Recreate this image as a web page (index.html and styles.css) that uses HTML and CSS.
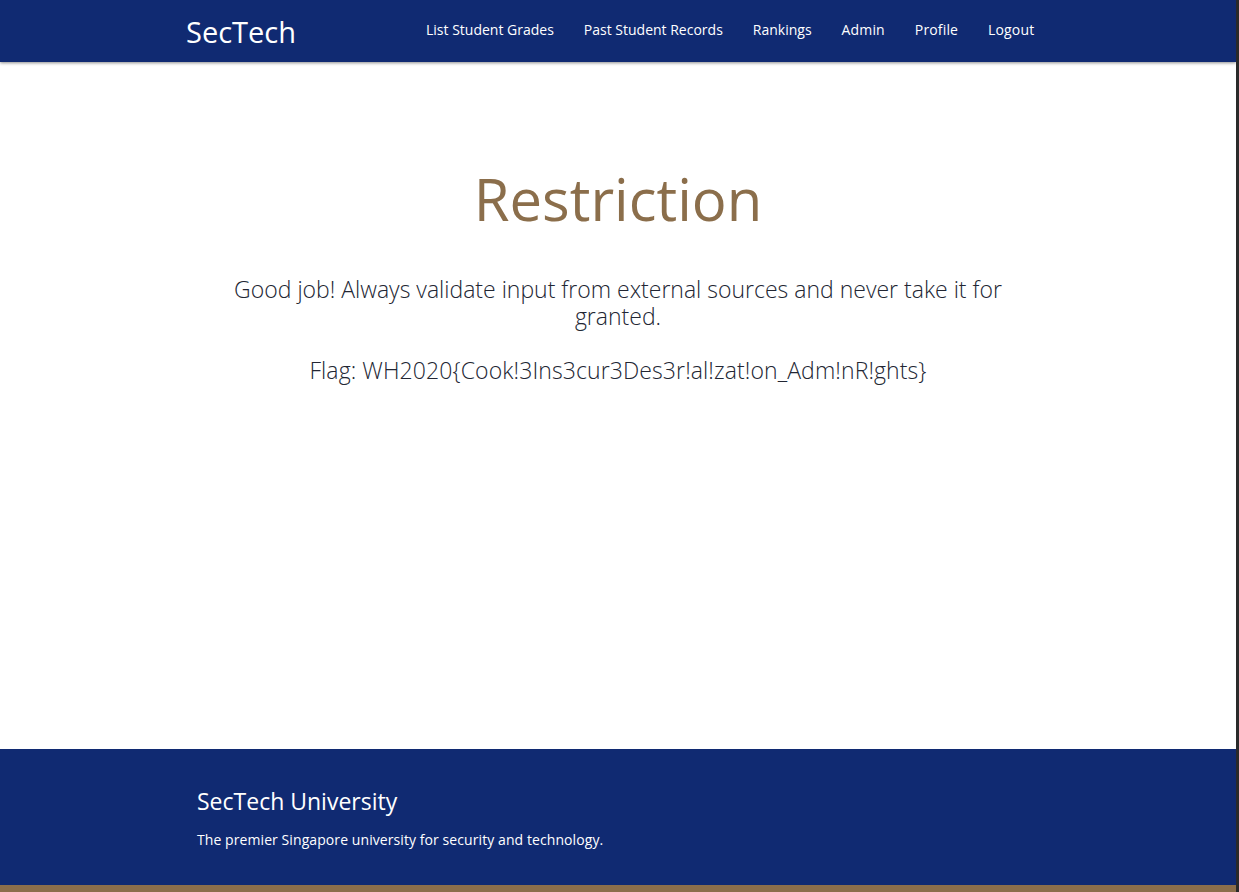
FILE: index.html
```html
<!DOCTYPE html>
<html lang="en">
<head>
<meta charset="utf-8">
<title>SecTech - Restriction</title>
<link rel="stylesheet" href="styles.css">
</head>
<body>
<div class="page">
  <header class="navbar">
    <div class="nav-inner">
      <a class="brand" href="#">SecTech</a>
      <nav class="nav-links">
        <a href="#">List Student Grades</a>
        <a href="#">Past Student Records</a>
        <a href="#">Rankings</a>
        <a href="#">Admin</a>
        <a href="#">Profile</a>
        <a href="#">Logout</a>
      </nav>
    </div>
  </header>
  <main class="main">
    <h1 class="title">Restriction</h1>
    <p class="lead">Good job! Always validate input from external sources and never take it for granted.</p>
    <p class="flag">Flag: WH2020{Cook!3Ins3cur3Des3r!al!zat!on_Adm!nR!ghts}</p>
  </main>
  <footer class="footer">
    <div class="footer-inner">
      <h2 class="footer-title">SecTech University</h2>
      <p class="footer-text">The premier Singapore university for security and technology.</p>
    </div>
  </footer>
  <div class="footer-strip"></div>
</div>
</body>
</html>
```

FILE: styles.css
```css
html {
  background: #2a2a2a;
}
body {
  margin: 0 3px 0 0;
  background: #ffffff;
  font-family: "Open Sans", "Noto Sans", sans-serif;
  color: #212529;
  overflow: hidden;
}
.page {
  display: flex;
  flex-direction: column;
  height: 892px;
}
.navbar {
  height: 62px;
  flex: 0 0 62px;
  background: #102a72;
  box-shadow: 0 1px 3px rgba(0, 0, 0, 0.45);
  position: relative;
  z-index: 1;
}
.nav-inner {
  display: flex;
  align-items: center;
  height: 100%;
  padding-left: 186px;
}
.brand {
  color: #ffffff;
  text-decoration: none;
  font-size: 29px;
  line-height: 1;
  margin-top: 1px;
}
.nav-links {
  display: flex;
  gap: 30px;
  margin-left: 130px;
  margin-top: -3px;
}
.nav-links a {
  color: #ffffff;
  text-decoration: none;
  font-size: 14px;
}
.nav-links a:nth-child(n+4) {
  letter-spacing: 0.15px;
}
.main {
  flex: 1;
  display: flex;
  flex-direction: column;
  align-items: center;
  text-align: center;
}
.title {
  margin: 102px 0 0;
  font-size: 58px;
  font-weight: 400;
  line-height: 1.2;
  color: #8b6e4b;
}
.lead {
  margin: 42px 0 0;
  width: 800px;
  font-size: 23px;
  font-weight: 300;
  line-height: 27px;
  color: #222633;
}
.flag {
  margin: 27px 0 0;
  font-size: 23px;
  font-weight: 300;
  line-height: 27px;
  letter-spacing: 0.1px;
  color: #222633;
}
.footer {
  flex: 0 0 136px;
  background: #102a72;
  color: #ffffff;
}
.footer-inner {
  padding: 37px 0 0 197px;
}
.footer-title {
  margin: 0;
  font-size: 23px;
  font-weight: 400;
  line-height: 30px;
}
.footer-text {
  margin: 14px 0 0;
  font-size: 14px;
  line-height: 20px;
  letter-spacing: 0.08px;
}
.footer-strip {
  flex: 0 0 7px;
  background: #8b6e4b;
}
```
